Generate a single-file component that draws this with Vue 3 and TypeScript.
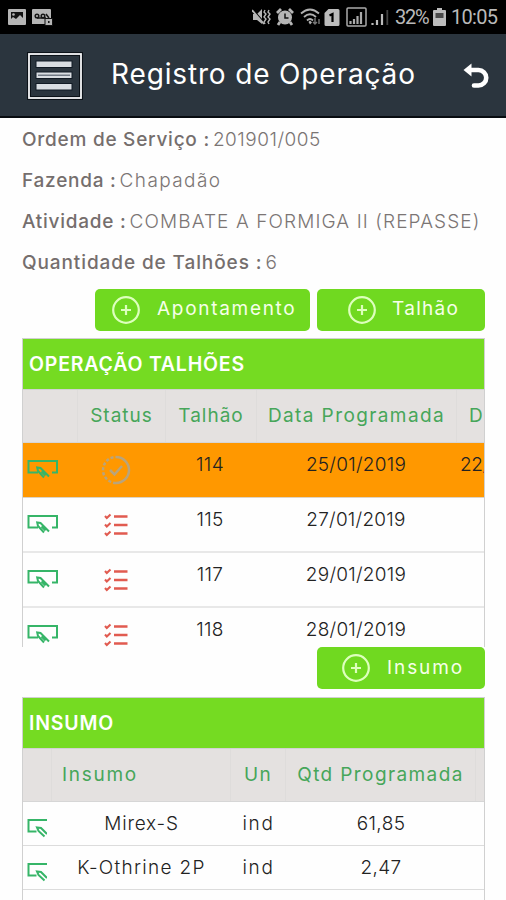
<script setup lang="ts">
interface Detail { key: string; label: string; value: string }
interface Plot { plot: string; planned: string; done: string; active: boolean }
interface Supply { name: string; unit: string; qty: string; key: string }

const details: Detail[] = [
  { key: 'order', label: 'Ordem de Serviço :', value: '201901/005' },
  { key: 'farm', label: 'Fazenda :', value: 'Chapadão' },
  { key: 'activity', label: 'Atividade :', value: 'COMBATE A FORMIGA II (REPASSE)' },
  { key: 'count', label: 'Quantidade de Talhões :', value: '6' },
]
const plots: Plot[] = [
  { plot: '114', planned: '25/01/2019', done: '22/', active: true },
  { plot: '115', planned: '27/01/2019', done: '', active: false },
  { plot: '117', planned: '29/01/2019', done: '', active: false },
  { plot: '118', planned: '28/01/2019', done: '', active: false },
]
const supplies: Supply[] = [
  { key: 'mirex', name: 'Mirex-S', unit: 'ind', qty: '61,85' },
  { key: 'kothrine', name: 'K-Othrine 2P', unit: 'ind', qty: '2,47' },
]
</script>

<template>
  <div class="screen">
    <div class="status">
      <svg class="s-image" viewBox="0 0 18 16"><rect width="18" height="16" rx="1" fill="#b5b5b5" /><path d="M3 3h12v6l-3-3-4 4-3-2-2 2z" fill="#111" /><circle cx="5.500" cy="5.500" r="1.300" fill="#b5b5b5" /></svg>
      <svg class="s-voice" viewBox="0 0 21 17"><path d="M1 0h17a1 1 0 0 1 1 1v14H0V1a1 1 0 0 1 1-1z" fill="#b5b5b5" /><g fill="none" stroke="#151515" stroke-width="1.500"><circle cx="5" cy="7" r="1.800" /><circle cx="11" cy="7" r="1.800" /><path d="M5 9h9M14 5l3 4" /></g><rect x="13" y="9.500" width="7.500" height="7" fill="#b5b5b5" stroke="#111" /><path d="M16.800 12v2" stroke="#111" stroke-width="1.500" /></svg>
      <span class="grow"></span>
      <svg class="s-mute" viewBox="0 0 19 18"><path d="M1 6h4l5-5v15l-5-4H1z" fill="#b5b5b5" /><path d="M1 2l12 14" stroke="#000" stroke-width="2" /><path d="M0 2l12 14" stroke="#b5b5b5" stroke-width="1.800" /><path d="M13 2l-1 2 2 2-2 3 2 2-2 3 1 2M17 2l-1 2 2 2-2 3 2 2-2 3 1 2" fill="none" stroke="#b5b5b5" stroke-width="1.400" /></svg>
      <svg class="s-alarm" viewBox="0 0 18 18"><circle cx="9" cy="9.500" r="7" fill="#b5b5b5" /><path d="M1 5l4-4M17 5l-4-4M4 14l-2 3M14 14l2 3" stroke="#b5b5b5" stroke-width="2.800" /><path d="M9 5.500v4.500h3.500" fill="none" stroke="#111" stroke-width="1.500" /></svg>
      <svg class="s-wifi" viewBox="0 0 22 18"><g fill="none" stroke="#b0b0b0" stroke-width="1.800"><path d="M1 5.500q9-8 18 0M4 9q6-5.500 12 0M7 12.500q3-3 6 0" /></g><path d="M8.500 14L10 12.500l2 2-2 2z" fill="#b0b0b0" /><path d="M15 10v6m-2-2l2 2 2-2M19 16v-5" fill="none" stroke="#777" stroke-width="1.400" /></svg>
      <svg class="s-sim" viewBox="0 0 16 17"><path d="M4.500 0H14a1.500 1.500 0 0 1 1.500 1.500v14A1.500 1.500 0 0 1 14 17H2a1.500 1.500 0 0 1-1.500-1.500V4z" fill="#bcbcbc" /><path d="M5.500 6.500L8.500 5v8" fill="none" stroke="#000" stroke-width="2.200" /></svg>
      <svg class="s-roam" viewBox="0 0 21 20"><rect x="1" y="1" width="19" height="18" rx="1" fill="none" stroke="#aaa" stroke-width="1.500" /><path d="M4.500 17v-3M8 17v-5M11.500 17V9M15 17V5" stroke="#aaa" stroke-width="2.200" /></svg>
      <svg class="s-bars" viewBox="0 0 18 17"><path d="M1.500 16v-2M6 16v-5M11 16V5" stroke="#bbb" stroke-width="2.200" /><path d="M16.300 16V1" stroke="#444" stroke-width="1.800" /></svg>
      <span class="percent">32%</span>
      <svg class="s-battery" viewBox="0 0 13 18"><path d="M4 0h5v2h3a1 1 0 0 1 1 1v14a1 1 0 0 1-1 1H1a1 1 0 0 1-1-1V3a1 1 0 0 1 1-1h3z" fill="#bcbcbc" /><rect x="2.500" y="5" width="8" height="5" fill="#4a4a4a" /></svg>
      <span class="clock">10:05</span>
    </div>

    <header class="bar">
      <svg class="menu" viewBox="0 0 56 48"><rect x="2" y="2" width="52" height="44" fill="none" stroke="#0c1218" stroke-width="4" /><rect x="2" y="2" width="52" height="44" fill="none" stroke="#f5f7f8" stroke-width="1.800" /><g fill="#d9dde2" stroke="#111a24" stroke-width="1"><rect x="9" y="9" width="36" height="6.500" /><rect x="9" y="20" width="36" height="6.500" /><rect x="9" y="31.500" width="36" height="6.500" /></g><path d="M11 23.250h32" stroke="#707985" stroke-width="1.500" /></svg>
      <h1>Registro de Operação</h1>
      <svg class="back" viewBox="0 0 26 26"><path d="M7 7h8.500a6.800 6.800 0 0 1 0 15.500H11" fill="none" stroke="#fff" stroke-width="4.600" stroke-linecap="round" /><path d="M.5 7L8.500.5v13z" fill="#fff" /></svg>
    </header>

    <main>
      <section class="details">
        <p v-for="d in details" :key="d.key" :class="d.key"><b>{{ d.label }}</b><span>{{ d.value }}</span></p>
      </section>

      <div class="actions">
        <button class="wide"><svg viewBox="0 0 28 28"><circle cx="14" cy="14" r="12.800" /><path d="M14 9v10M9 14h10" /></svg><span>Apontamento</span></button>
        <button class="plot-button"><svg viewBox="0 0 28 28"><circle cx="14" cy="14" r="12.800" /><path d="M14 9v10M9 14h10" /></svg><span>Talhão</span></button>
      </div>

      <section class="panel operations">
        <h2><span>OPERAÇÃO TALHÕES</span></h2>
        <div class="row head"><div></div><div><span class="h-status">Status</span></div><div><span class="h-plot">Talhão</span></div><div><span class="h-date">Data Programada</span></div><div class="last">D</div></div>
        <div v-for="p in plots" :key="p.plot" class="row item" :class="{ active: p.active }">
          <div class="edit"><svg class="form-icon" viewBox="0 0 32 20"><path d="M11 13.500H1.500V2H30v11.500h-5" /><path d="M17 18.500l-6-6.500-.8-3.500 3.300.5 8.500 8.500M14.500 12.500l4 4" /></svg></div>
          <div class="state">
            <svg v-if="p.active" class="check-icon" viewBox="0 0 30 30"><path d="M15 2a13 13 0 0 1 0 26" /><path class="dashes" d="M15 28a13 13 0 0 1 0-26" /><path class="tick" d="M9 15l4.500 4.500L21 11" /></svg>
            <svg v-else class="list-icon" viewBox="0 0 24 24"><path class="lines" d="M10 3.500h13.500M10 12h13.500M10 20.500h13.500" /><path class="ticks" d="M1 3l1.800 2 3.700-3.500M1 11.500l1.800 2L6.500 10M1 20l1.800 2 3.700-3.500" /></svg>
          </div>
          <div class="plot"><span>{{ p.plot }}</span></div>
          <div class="date"><span>{{ p.planned }}</span></div>
          <div class="last"><span>{{ p.done }}</span></div>
        </div>
      </section>

      <div class="actions second">
        <button class="supply-button"><svg viewBox="0 0 28 28"><circle cx="14" cy="14" r="12.800" /><path d="M14 9v10M9 14h10" /></svg><span>Insumo</span></button>
      </div>

      <section class="panel supplies">
        <h2><span>INSUMO</span></h2>
        <div class="row head"><div></div><div class="left"><span class="h-supply">Insumo</span></div><div><span class="h-unit">Un</span></div><div><span class="h-qty">Qtd Programada</span></div><div></div></div>
        <div v-for="s in supplies" :key="s.key" class="row item">
          <div class="edit"><svg class="form-icon small" viewBox="0 0 20 20"><path d="M9.500 13.500H1.500V2H20" /><path d="M17.500 18.500L11.500 13 10 9.500l4 .5 6 6" /></svg></div>
          <div><span :class="s.key">{{ s.name }}</span></div>
          <div><span class="unit">{{ s.unit }}</span></div>
          <div><span class="qty">{{ s.qty }}</span></div>
          <div></div>
        </div>
      </section>
    </main>
  </div>
</template>

<style>
body { margin: 0; overflow: hidden; background: #fefefe; }
</style>

<style scoped>
* { box-sizing: border-box; }
.screen { width: 506px; height: 900px; overflow: hidden; background: #fefefe; font-family: Inter, sans-serif; }
svg { flex: none; display: block; }
.status { height: 34px; background: #000; display: flex; align-items: center; padding: 0 8px 0 8px; color: #b9b9b9; font: 400 20px/35px Roboto, sans-serif; }
.grow { flex: 1; }
.s-image { width: 18px; height: 16px; }
.s-voice { width: 21px; height: 17px; margin-left: 6px; }
.s-mute { width: 19px; height: 18px; }
.s-alarm { width: 18px; height: 18px; margin-left: 5px; }
.s-wifi { width: 22px; height: 18px; margin-left: 6px; }
.s-sim { width: 16px; height: 17px; margin-left: 2px; }
.s-roam { width: 21px; height: 20px; margin-left: 6px; }
.s-bars { width: 18px; height: 17px; margin-left: 4px; }
.percent { width: 34px; margin-left: 6px; letter-spacing: -1.3px; white-space: nowrap; }
.s-battery { width: 13px; height: 18px; margin-left: 4px; }
.clock { width: 47px; margin-left: 5px; letter-spacing: -.7px; white-space: nowrap; }
.bar { height: 84px; background: #2b353e; border-bottom: 2px solid #080c10; display: flex; align-items: center; padding: 0 17px 0 27px; color: #fff; }
.menu { width: 56px; height: 48px; margin-top: 2px; }
h1 { margin: -2px 0 0 28px; flex: 1; font-size: 28px; font-weight: 400; line-height: 40px; letter-spacing: .85px; white-space: nowrap; }
.back { width: 26px; height: 26px; margin-top: 2px; }
main { padding: 2px 21px 0 22px; }
.details { height: 169px; color: #756e6d; font-size: 19px; }
.details p { margin: 0; height: 40.850px; line-height: 39px; white-space: nowrap; display: flex; gap: 3px; }
.details b { font-weight: 500; letter-spacing: .75px; }
.details span { font-weight: 300; letter-spacing: .5px; color: #7b7574; }
.count b { letter-spacing: .9px; }
.farm span { letter-spacing: 1.4px; }
.activity span { letter-spacing: 1.1px; }
.actions { display: flex; justify-content: flex-end; gap: 7px; }
button { height: 42px; border: 0; border-radius: 5px; background: #70d920; color: #f6ffe9; display: flex; align-items: center; padding: 0; font: 400 19px/38px Inter, sans-serif; white-space: nowrap; }
button svg { width: 28px; height: 28px; fill: none; stroke: #ddffbd; stroke-width: 2.200; }
button span { margin-top: -3px; }
.wide { width: 215px; padding-left: 17px; gap: 17px; letter-spacing: 1.700px; }
.plot-button { width: 168px; padding-left: 31px; gap: 16px; letter-spacing: 1.300px; }
.supply-button { width: 168px; padding-left: 25px; gap: 17px; letter-spacing: 1.900px; }
.supply-button span { margin-top: -1px; }
.panel { width: 463px; border: 1px solid #d0d0d0; border-bottom: 0; overflow: hidden; }
.operations { height: 309px; margin-top: 7px; }
.supplies { height: 205px; margin-top: 8px; }
h2 { margin: 0; height: 51px; padding-left: 6px; background: #75db22; color: #fff; font-size: 19.500px; line-height: 51px; font-weight: 600; border-bottom: 1px solid #d2d2d2; letter-spacing: .8px; white-space: nowrap; }
.row { display: grid; height: 55px; text-align: center; font-size: 19px; font-weight: 300; color: #222; border-bottom: 2px solid #e8e8e8; line-height: 43px; white-space: nowrap; }
.operations .row { grid-template-columns: 55px 88px 91px 200px 27px; }
.supplies .row { grid-template-columns: 29px 179px 55px 190px 8px; }
.row.head { height: 53px; background: #e4e1e0; color: #47a65a; border-bottom: 1px solid #d6d6d6; font-weight: 400; line-height: 52px; }
.head > div { border-right: 1px solid #dedcdb; }
.head > div:last-child { border-right: 0; }
.row > .last { text-align: left; padding-left: 3px; overflow: hidden; }
.item > .last { letter-spacing: -.3px; }
.head > .last { padding-left: 12px; }
.h-status, .h-plot { letter-spacing: 1px; }
.h-date, .h-qty, .h-unit { letter-spacing: 1.400px; }
.h-supply { letter-spacing: 1.700px; }
.item > .plot { padding-right: 3px; letter-spacing: .3px; }
.item > .date { padding-right: 2px; letter-spacing: .25px; }
.mirex { letter-spacing: .8px; }
.kothrine { letter-spacing: 1.300px; }
.unit { letter-spacing: 1.700px; }
.qty { letter-spacing: .4px; }
.row.active { background: #ff9800; border-bottom: 1px solid #dcd3c5; }
.edit { padding: 16px 0 0 4px; }
.form-icon { width: 32px; height: 20px; fill: none; stroke: #36b568; stroke-width: 2; }
.form-icon.small { width: 20px; height: 20px; }
.state { padding: 12px 0 0 23px; }
.check-icon { width: 30px; height: 30px; fill: none; stroke: #b9a47c; stroke-width: 2.500; }
.dashes { stroke-dasharray: 3 2; }
.list-icon { width: 24px; height: 24px; margin: 3px 0 0 3px; fill: none; stroke: #e15b50; stroke-width: 2.300; }
.ticks { stroke-width: 2.100; }
.supplies .item { height: 44px; border-bottom-width: 1px; border-color: #dcdcdc; }
.supplies .edit { padding-top: 16px; }
.head > .left { text-align: left; padding-left: 10px; }
</style>
